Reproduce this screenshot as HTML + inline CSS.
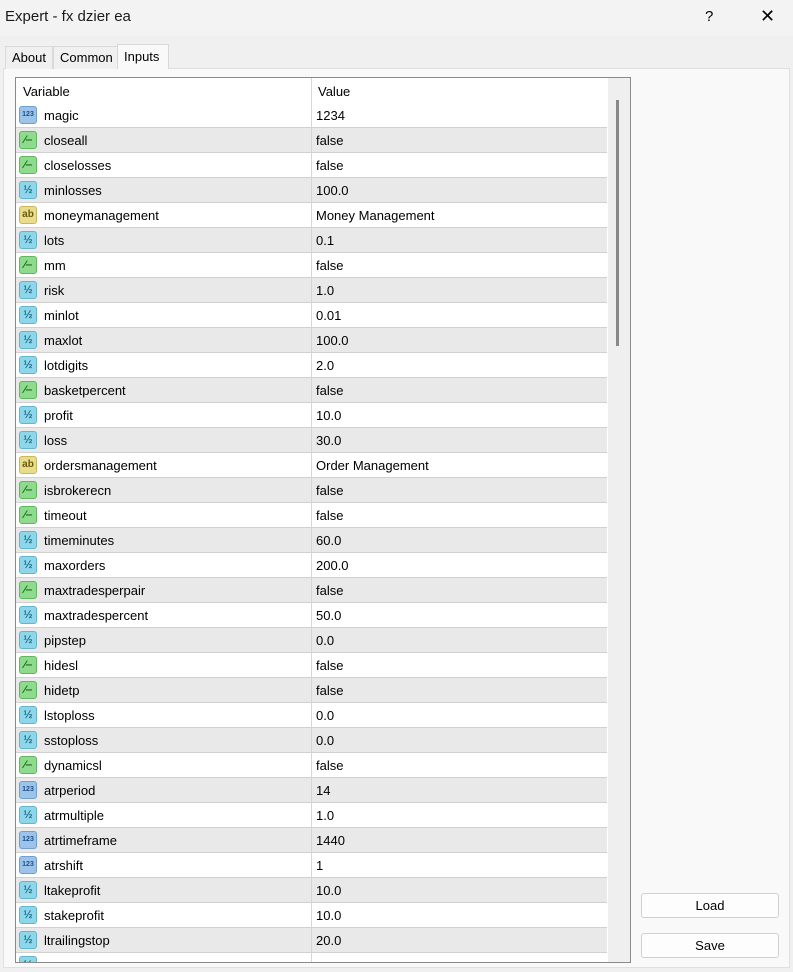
<!DOCTYPE html>
<html><head><meta charset="utf-8"><style>
*{margin:0;padding:0;box-sizing:border-box}
body{width:793px;height:972px;background:#f0f0f0;font-family:"Liberation Sans",sans-serif;font-size:13px;color:#000;position:relative;overflow:hidden}
.tb{position:absolute;left:0;top:0;width:793px;height:36px;background:#f3f3f3}
.title{position:absolute;left:5px;top:8px;font-size:15px;color:#1a1a1a}
.q{position:absolute;left:705px;top:8px;font-size:15px}
.x{position:absolute;left:760px;top:6px;font-size:18px}
.tab{position:absolute;top:46px;height:23px;border:1px solid #d9d9d9;border-bottom:none;background:#f0f0f0;font-size:13px;padding:3px 0 0 6px}
.panel{position:absolute;left:3px;top:68px;width:787px;height:900px;background:#f9f9f9;border:1px solid #e0e0e0}
.tbl{position:absolute;left:15px;top:77px;width:616px;height:886px;border:1px solid #8a8a8a;background:#fff;overflow:hidden}
.hdr{position:absolute;left:0;top:0;width:592px;height:25px;background:#fff}
.hdr span{position:absolute;top:6px}
.row{position:absolute;left:0;width:591px;height:25px;border-bottom:1px solid #d0d0d0}
.row.g{background:#e9e9e9}
.row .n{position:absolute;left:28px;top:5px}
.row .v{position:absolute;left:300px;top:5px}
.vl{position:absolute;left:295px;top:0;width:1px;height:886px;background:#d6d6d6}
.ic{position:absolute;left:3px;top:3px;width:18px;height:18px;border-radius:3px;font-size:9px;font-weight:bold;text-align:center;line-height:16px}
.i{background:#9cc3ea;color:#1d4f8a;border:1px solid #6f9fcf;font-size:7px}
.b{background:#8edb8e;color:#1a6a1a;border:1px solid #5fb75f;font-size:11px}
.d{background:#8fd6ea;color:#1a6f8a;border:1px solid #62b6cf;font-size:11px}
.s{background:#e9dc8a;color:#6a5a10;border:1px solid #c9b85a;font-size:10px}
.sb{position:absolute;left:592px;top:0;width:22px;height:886px;background:#efefef}
.th{position:absolute;left:8px;top:22px;width:3px;height:246px;background:#888}
.btn{position:absolute;left:641px;width:138px;height:25px;background:#fdfdfd;border:1px solid #d0d0d0;border-radius:3px;text-align:center;line-height:23px;font-size:13px}
</style></head><body>
<div class="tb"></div>
<div class="title">Expert - fx dzier ea</div>
<div class="q">?</div><div class="x">✕</div>
<div class="panel"></div>
<div class="tab" style="left:5px;width:48px">About</div>
<div class="tab" style="left:53px;width:65px">Common</div>
<div class="tab" style="left:117px;top:44px;height:25px;width:52px;background:#f9f9f9;padding-top:4px">Inputs</div>
<div class="tbl">
<div class="hdr"><span style="left:7px">Variable</span><span style="left:302px">Value</span></div>
<div class="row" style="top:25px"><div class="ic i">123</div><span class="n">magic</span><span class="v">1234</span></div>
<div class="row g" style="top:50px"><div class="ic b">⁄‒</div><span class="n">closeall</span><span class="v">false</span></div>
<div class="row" style="top:75px"><div class="ic b">⁄‒</div><span class="n">closelosses</span><span class="v">false</span></div>
<div class="row g" style="top:100px"><div class="ic d">½</div><span class="n">minlosses</span><span class="v">100.0</span></div>
<div class="row" style="top:125px"><div class="ic s">ab</div><span class="n">moneymanagement</span><span class="v">Money Management</span></div>
<div class="row g" style="top:150px"><div class="ic d">½</div><span class="n">lots</span><span class="v">0.1</span></div>
<div class="row" style="top:175px"><div class="ic b">⁄‒</div><span class="n">mm</span><span class="v">false</span></div>
<div class="row g" style="top:200px"><div class="ic d">½</div><span class="n">risk</span><span class="v">1.0</span></div>
<div class="row" style="top:225px"><div class="ic d">½</div><span class="n">minlot</span><span class="v">0.01</span></div>
<div class="row g" style="top:250px"><div class="ic d">½</div><span class="n">maxlot</span><span class="v">100.0</span></div>
<div class="row" style="top:275px"><div class="ic d">½</div><span class="n">lotdigits</span><span class="v">2.0</span></div>
<div class="row g" style="top:300px"><div class="ic b">⁄‒</div><span class="n">basketpercent</span><span class="v">false</span></div>
<div class="row" style="top:325px"><div class="ic d">½</div><span class="n">profit</span><span class="v">10.0</span></div>
<div class="row g" style="top:350px"><div class="ic d">½</div><span class="n">loss</span><span class="v">30.0</span></div>
<div class="row" style="top:375px"><div class="ic s">ab</div><span class="n">ordersmanagement</span><span class="v">Order Management</span></div>
<div class="row g" style="top:400px"><div class="ic b">⁄‒</div><span class="n">isbrokerecn</span><span class="v">false</span></div>
<div class="row" style="top:425px"><div class="ic b">⁄‒</div><span class="n">timeout</span><span class="v">false</span></div>
<div class="row g" style="top:450px"><div class="ic d">½</div><span class="n">timeminutes</span><span class="v">60.0</span></div>
<div class="row" style="top:475px"><div class="ic d">½</div><span class="n">maxorders</span><span class="v">200.0</span></div>
<div class="row g" style="top:500px"><div class="ic b">⁄‒</div><span class="n">maxtradesperpair</span><span class="v">false</span></div>
<div class="row" style="top:525px"><div class="ic d">½</div><span class="n">maxtradespercent</span><span class="v">50.0</span></div>
<div class="row g" style="top:550px"><div class="ic d">½</div><span class="n">pipstep</span><span class="v">0.0</span></div>
<div class="row" style="top:575px"><div class="ic b">⁄‒</div><span class="n">hidesl</span><span class="v">false</span></div>
<div class="row g" style="top:600px"><div class="ic b">⁄‒</div><span class="n">hidetp</span><span class="v">false</span></div>
<div class="row" style="top:625px"><div class="ic d">½</div><span class="n">lstoploss</span><span class="v">0.0</span></div>
<div class="row g" style="top:650px"><div class="ic d">½</div><span class="n">sstoploss</span><span class="v">0.0</span></div>
<div class="row" style="top:675px"><div class="ic b">⁄‒</div><span class="n">dynamicsl</span><span class="v">false</span></div>
<div class="row g" style="top:700px"><div class="ic i">123</div><span class="n">atrperiod</span><span class="v">14</span></div>
<div class="row" style="top:725px"><div class="ic d">½</div><span class="n">atrmultiple</span><span class="v">1.0</span></div>
<div class="row g" style="top:750px"><div class="ic i">123</div><span class="n">atrtimeframe</span><span class="v">1440</span></div>
<div class="row" style="top:775px"><div class="ic i">123</div><span class="n">atrshift</span><span class="v">1</span></div>
<div class="row g" style="top:800px"><div class="ic d">½</div><span class="n">ltakeprofit</span><span class="v">10.0</span></div>
<div class="row" style="top:825px"><div class="ic d">½</div><span class="n">stakeprofit</span><span class="v">10.0</span></div>
<div class="row g" style="top:850px"><div class="ic d">½</div><span class="n">ltrailingstop</span><span class="v">20.0</span></div>
<div class="row" style="top:875px;border:none"><div class="ic d">½</div></div>
<div class="vl"></div>
<div class="sb"><div class="th"></div></div>
</div>
<div class="btn" style="top:893px">Load</div>
<div class="btn" style="top:933px">Save</div>
</body></html>
